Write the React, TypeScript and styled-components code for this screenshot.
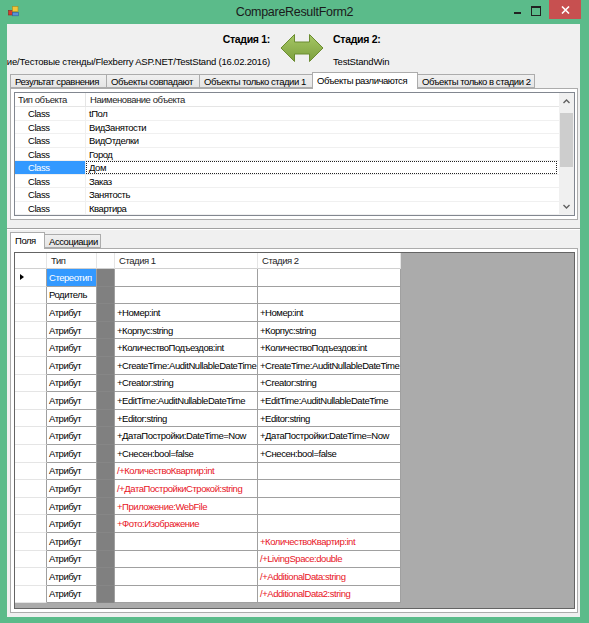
import React from "react";
import styled, { createGlobalStyle } from "styled-components";

const Global = createGlobalStyle`
  html, body { margin: 0; padding: 0; background: #5bbb8a; }
  body {
    font-family: "Liberation Sans", Arial, sans-serif;
    font-size: 9.5px;
    letter-spacing: -0.45px;
    color: #000;
  }
  * { box-sizing: border-box; }
`;

const Window = styled.div`
  width: 589px;
  height: 623px;
  background: #5bbb8a;
  display: flex;
  flex-direction: column;
  overflow: hidden;
`;

const TitleBar = styled.div`
  height: 24px;
  flex-shrink: 0;
  display: grid;
  grid-template-columns: 1fr auto 1fr;
  align-items: start;
`;

const TitleIcon = styled.div`
  padding: 6px 0 0 8px;
  display: flex;
`;

const TitleText = styled.div`
  font-size: 12.5px;
  letter-spacing: -0.3px;
  color: #1a1a1a;
  line-height: 24px;
`;

const TitleButtons = styled.div`
  display: flex;
  justify-content: flex-end;
  align-items: flex-start;
  padding-right: 8px;
`;

const MinButton = styled.div`
  width: 18px;
  height: 19px;
  display: flex;
  align-items: flex-end;
  justify-content: center;
  padding-bottom: 5px;
  &::after { content: ""; width: 7px; height: 2px; background: #222; }
`;

const MaxButton = styled.div`
  width: 20px;
  height: 19px;
  display: flex;
  justify-content: center;
  padding-top: 6px;
  &::after {
    content: "";
    width: 8px;
    height: 7px;
    border: 1px solid #222;
    border-top-width: 2px;
  }
`;

const CloseButton = styled.div`
  width: 32px;
  height: 19px;
  background: #c75050;
  display: flex;
  align-items: center;
  justify-content: center;
  margin-left: 3px;
`;

const Client = styled.div`
  flex: 1;
  margin: 0 9px 6px 7px;
  background: #f0f0f0;
  display: flex;
  flex-direction: column;
  overflow: hidden;
`;

const Header = styled.div`
  height: 48px;
  flex-shrink: 0;
  display: grid;
  grid-template-columns: 263px 63px 1fr;
  grid-template-rows: 14px 14px;
  row-gap: 8px;
  padding-top: 8px;
`;

const StageLabel = styled.div<{ $right?: boolean }>`
  display: flex;
  justify-content: ${(p) => (p.$right ? "flex-end" : "flex-start")};
  align-items: center;
  white-space: nowrap;
  font-weight: bold;
  font-size: 10.5px;
  letter-spacing: -0.3px;
`;

const StageValue = styled.div<{ $right?: boolean }>`
  display: flex;
  justify-content: ${(p) => (p.$right ? "flex-end" : "flex-start")};
  align-items: center;
  white-space: nowrap;
  letter-spacing: -0.2px;
`;

const ArrowCell = styled.div`
  grid-column: 2;
  grid-row: 1 / span 2;
  display: flex;
  justify-content: center;
  align-items: flex-start;
  padding-top: 1px;
`;

const TabStrip = styled.div`
  display: flex;
  align-items: flex-end;
  height: 16px;
  padding-left: 3px;
  flex-shrink: 0;
  position: relative;
  z-index: 1;
`;

const Tab = styled.div<{ $active?: boolean; $w: number }>`
  width: ${(p) => p.$w}px;
  height: ${(p) => (p.$active ? 17 : 14)}px;
  margin-bottom: ${(p) => (p.$active ? -1 : 0)}px;
  margin-left: -1px;
  &:first-child { margin-left: 0; }
  border: 1px solid #acacac;
  border-bottom: ${(p) => (p.$active ? "none" : "1px solid #acacac")};
  background: ${(p) => (p.$active ? "#ffffff" : "linear-gradient(#f0f0f0, #e5e5e5)")};
  padding-left: 4px;
  display: flex;
  align-items: center;
  padding-bottom: ${(p) => (p.$active ? 2 : 0)}px;
  white-space: nowrap;
  overflow: hidden;
  position: relative;
  z-index: ${(p) => (p.$active ? 2 : 1)};
`;

const TabPanel = styled.div<{ $grow?: boolean }>`
  margin: 0 2px 0 3px;
  border: 1px solid #acacac;
  background: #ffffff;
  padding: 3px 2px 3px 3px;
  ${(p) => (p.$grow ? "flex: 1; display: flex; flex-direction: column;" : "")}
`;

const ListBox = styled.div`
  border: 1px solid #828790;
  background: #fff;
  display: flex;
  height: 124px;
`;

const ListBody = styled.div`
  flex: 1;
  display: flex;
  flex-direction: column;
`;

const ListHeader = styled.div`
  display: grid;
  grid-template-columns: 71px 1fr;
  height: 14px;
  border-bottom: 1px solid #e5e5e5;
`;

const ListHeadCell = styled.div<{ $first?: boolean }>`
  padding-left: ${(p) => (p.$first ? 3 : 4)}px;
  border-right: ${(p) => (p.$first ? "1px solid #e5e5e5" : "none")};
  display: flex;
  align-items: center;
  color: #1e1e1e;
`;

const ListRow = styled.div`
  display: grid;
  grid-template-columns: 71px 1fr;
  height: 13.5px;
  border-bottom: 1px solid #f0f0f0;
`;

const ListTypeCell = styled.div<{ $sel?: boolean }>`
  padding-left: 13px;
  display: flex;
  align-items: center;
  background: ${(p) => (p.$sel ? "#3399ff" : "transparent")};
  color: ${(p) => (p.$sel ? "#fff" : "#000")};
  border-right: 1px solid #f0f0f0;
`;

const ListNameCell = styled.div<{ $focus?: boolean }>`
  padding-left: 2px;
  display: flex;
  align-items: center;
  margin-right: 2px;
  border: 1px ${(p) => (p.$focus ? "dotted #222" : "solid transparent")};
`;

const ScrollBar = styled.div`
  width: 15px;
  background: #f0f0f0;
  display: flex;
  flex-direction: column;
`;

const ScrollArrow = styled.div`
  height: 17px;
  display: flex;
  align-items: center;
  justify-content: center;
`;

const ScrollTrack = styled.div`
  flex: 1;
  padding: 3px 1px 0 1px;
`;

const ScrollThumb = styled.div`
  height: 54px;
  background: #cdcdcd;
`;

const LowerSection = styled.div`
  margin-top: 8px;
  border-top: 1px solid #a0a0a0;
  box-shadow: inset 0 1px #ffffff;
  padding-top: 3px;
  padding-bottom: 4px;
  flex: 1;
  display: flex;
  flex-direction: column;
`;

const Grid = styled.div`
  flex: 1;
  border: 1px solid #646464;
  background: #ababab;
  overflow: hidden;
`;

const GridRow = styled.div<{ $head?: boolean }>`
  display: grid;
  grid-template-columns: 32px 50px 18px 143px 143px;
  height: ${(p) => (p.$head ? "16px" : "17.6px")};
`;

const HeadCell = styled.div`
  background: #fff;
  border-right: 1px solid #e5e5e5;
  border-bottom: 1px solid #d0d0d0;
  padding-left: 4px;
  display: flex;
  align-items: center;
  white-space: nowrap;
  color: #1e1e1e;
`;

const RowHeadCell = styled.div`
  background: #fff;
  border-right: 1px solid #a0a0a0;
  border-bottom: 1px solid #e5e5e5;
  display: flex;
  align-items: center;
  padding-left: 5px;
`;

const Indicator = styled.div`
  width: 0;
  height: 0;
  border-top: 3.5px solid transparent;
  border-bottom: 3.5px solid transparent;
  border-left: 4px solid #000;
`;

const Cell = styled.div<{ $sel?: boolean; $red?: boolean }>`
  background: ${(p) => (p.$sel ? "#3399ff" : "#fff")};
  color: ${(p) => (p.$sel ? "#fff" : p.$red ? "#e8141e" : "#000")};
  border-right: 1px solid #a0a0a0;
  border-bottom: 1px solid #a0a0a0;
  padding-left: 2px;
  display: flex;
  align-items: center;
  white-space: nowrap;
  overflow: hidden;
`;

const DarkCell = styled.div`
  background: #808080;
  border-right: 1px solid #a0a0a0;
  border-bottom: 1px solid #868686;
`;

const AppIcon = () => (
  <svg width="11" height="11" viewBox="0 0 11 11">
    <rect x="0.5" y="4.5" width="4" height="4.5" fill="#d83a2e" stroke="#8a2a20" strokeWidth="0.6" />
    <rect x="4.5" y="0.5" width="5.5" height="5" fill="#f3c53a" stroke="#b08a1a" strokeWidth="0.6" />
    <rect x="4.5" y="6.3" width="6" height="3.5" fill="#5b8fd6" stroke="#2f5c9a" strokeWidth="0.6" />
  </svg>
);

const CloseGlyph = () => (
  <svg width="9" height="8" viewBox="0 0 9 8">
    <path d="M1 0.5 L8 7.5 M8 0.5 L1 7.5" stroke="#fff" strokeWidth="1.6" />
  </svg>
);

const DoubleArrow = () => (
  <svg width="44" height="30" viewBox="0 0 44 30">
    <defs>
      <linearGradient id="arrowGrad" x1="0" y1="0" x2="0" y2="1">
        <stop offset="0" stopColor="#a6c765" />
        <stop offset="1" stopColor="#7c9f3d" />
      </linearGradient>
    </defs>
    <path
      d="M1 15 L14.5 1.5 L14.5 9 L29.5 9 L29.5 1.5 L43 15 L29.5 28.5 L29.5 21 L14.5 21 L14.5 28.5 Z"
      fill="url(#arrowGrad)"
      stroke="#6b8c30"
      strokeWidth="1"
      strokeLinejoin="round"
    />
  </svg>
);

const Chevron = ({ up }: { up?: boolean }) => (
  <svg width="7" height="5" viewBox="0 0 7 5">
    <path d={up ? "M0.5 4 L3.5 1 L6.5 4" : "M0.5 1 L3.5 4 L6.5 1"} fill="none" stroke="#606060" strokeWidth="1.4" />
  </svg>
);

const topTabs = [
  { label: "Результат сравнения", w: 97 },
  { label: "Объекты совпадают", w: 94 },
  { label: "Объекты только стадии 1", w: 114 },
  { label: "Объекты различаются", w: 106, active: true },
  { label: "Объекты только в стадии 2", w: 118 },
];

const objects = ["tПол", "ВидЗанятости", "ВидОтделки", "Город", "Дом", "Заказ", "Занятость", "Квартира"];

type Row = { type: string; s1: string; s2: string; red1?: boolean; red2?: boolean; sel?: boolean; cur?: boolean };

const rows: Row[] = [
  { type: "Стереотип", s1: "", s2: "", sel: true, cur: true },
  { type: "Родитель", s1: "", s2: "" },
  { type: "Атрибут", s1: "+Номер:int", s2: "+Номер:int" },
  { type: "Атрибут", s1: "+Корпус:string", s2: "+Корпус:string" },
  { type: "Атрибут", s1: "+КоличествоПодъездов:int", s2: "+КоличествоПодъездов:int" },
  { type: "Атрибут", s1: "+CreateTime:AuditNullableDateTime", s2: "+CreateTime:AuditNullableDateTime" },
  { type: "Атрибут", s1: "+Creator:string", s2: "+Creator:string" },
  { type: "Атрибут", s1: "+EditTime:AuditNullableDateTime", s2: "+EditTime:AuditNullableDateTime" },
  { type: "Атрибут", s1: "+Editor:string", s2: "+Editor:string" },
  { type: "Атрибут", s1: "+ДатаПостройки:DateTime=Now", s2: "+ДатаПостройки:DateTime=Now" },
  { type: "Атрибут", s1: "+Снесен:bool=false", s2: "+Снесен:bool=false" },
  { type: "Атрибут", s1: "/+КоличествоКвартир:int", s2: "", red1: true },
  { type: "Атрибут", s1: "/+ДатаПостройкиСтрокой:string", s2: "", red1: true },
  { type: "Атрибут", s1: "+Приложение:WebFile", s2: "", red1: true },
  { type: "Атрибут", s1: "+Фото:Изображение", s2: "", red1: true },
  { type: "Атрибут", s1: "", s2: "+КоличествоКвартир:int", red2: true },
  { type: "Атрибут", s1: "", s2: "/+LivingSpace:double", red2: true },
  { type: "Атрибут", s1: "", s2: "/+AdditionalData:string", red2: true },
  { type: "Атрибут", s1: "", s2: "/+AdditionalData2:string", red2: true },
];

export default function App() {
  return (
    <>
      <Global />
      <Window>
        <TitleBar>
          <TitleIcon>
            <AppIcon />
          </TitleIcon>
          <TitleText>CompareResultForm2</TitleText>
          <TitleButtons>
            <MinButton />
            <MaxButton />
            <CloseButton>
              <CloseGlyph />
            </CloseButton>
          </TitleButtons>
        </TitleBar>
        <Client>
          <Header>
            <StageLabel $right>Стадия 1:</StageLabel>
            <ArrowCell>
              <DoubleArrow />
            </ArrowCell>
            <StageLabel>Стадия 2:</StageLabel>
            <StageValue $right>ние/Тестовые стенды/Flexberry ASP.NET/TestStand (16.02.2016)</StageValue>
            <StageValue>TestStandWin</StageValue>
          </Header>

          <TabStrip>
            {topTabs.map((t) => (
              <Tab key={t.label} $w={t.w} $active={t.active}>
                {t.label}
              </Tab>
            ))}
          </TabStrip>
          <TabPanel>
            <ListBox>
              <ListBody>
                <ListHeader>
                  <ListHeadCell $first>Тип объекта</ListHeadCell>
                  <ListHeadCell>Наименование объекта</ListHeadCell>
                </ListHeader>
                {objects.map((o) => (
                  <ListRow key={o}>
                    <ListTypeCell $sel={o === "Дом"}>Class</ListTypeCell>
                    <ListNameCell $focus={o === "Дом"}>{o}</ListNameCell>
                  </ListRow>
                ))}
              </ListBody>
              <ScrollBar>
                <ScrollArrow>
                  <Chevron up />
                </ScrollArrow>
                <ScrollTrack>
                  <ScrollThumb />
                </ScrollTrack>
                <ScrollArrow>
                  <Chevron />
                </ScrollArrow>
              </ScrollBar>
            </ListBox>
          </TabPanel>

          <LowerSection>
            <TabStrip>
              <Tab $w={35} $active>
                Поля
              </Tab>
              <Tab $w={57}>Ассоциации</Tab>
            </TabStrip>
            <TabPanel $grow>
              <Grid>
                <GridRow $head>
                  <HeadCell />
                  <HeadCell>Тип</HeadCell>
                  <HeadCell />
                  <HeadCell>Стадия 1</HeadCell>
                  <HeadCell>Стадия 2</HeadCell>
                </GridRow>
                {rows.map((r, i) => (
                  <GridRow key={i}>
                    <RowHeadCell>{r.cur ? <Indicator /> : null}</RowHeadCell>
                    <Cell $sel={r.sel}>{r.type}</Cell>
                    <DarkCell />
                    <Cell $red={r.red1}>{r.s1}</Cell>
                    <Cell $red={r.red2}>{r.s2}</Cell>
                  </GridRow>
                ))}
              </Grid>
            </TabPanel>
          </LowerSection>
        </Client>
      </Window>
    </>
  );
}
